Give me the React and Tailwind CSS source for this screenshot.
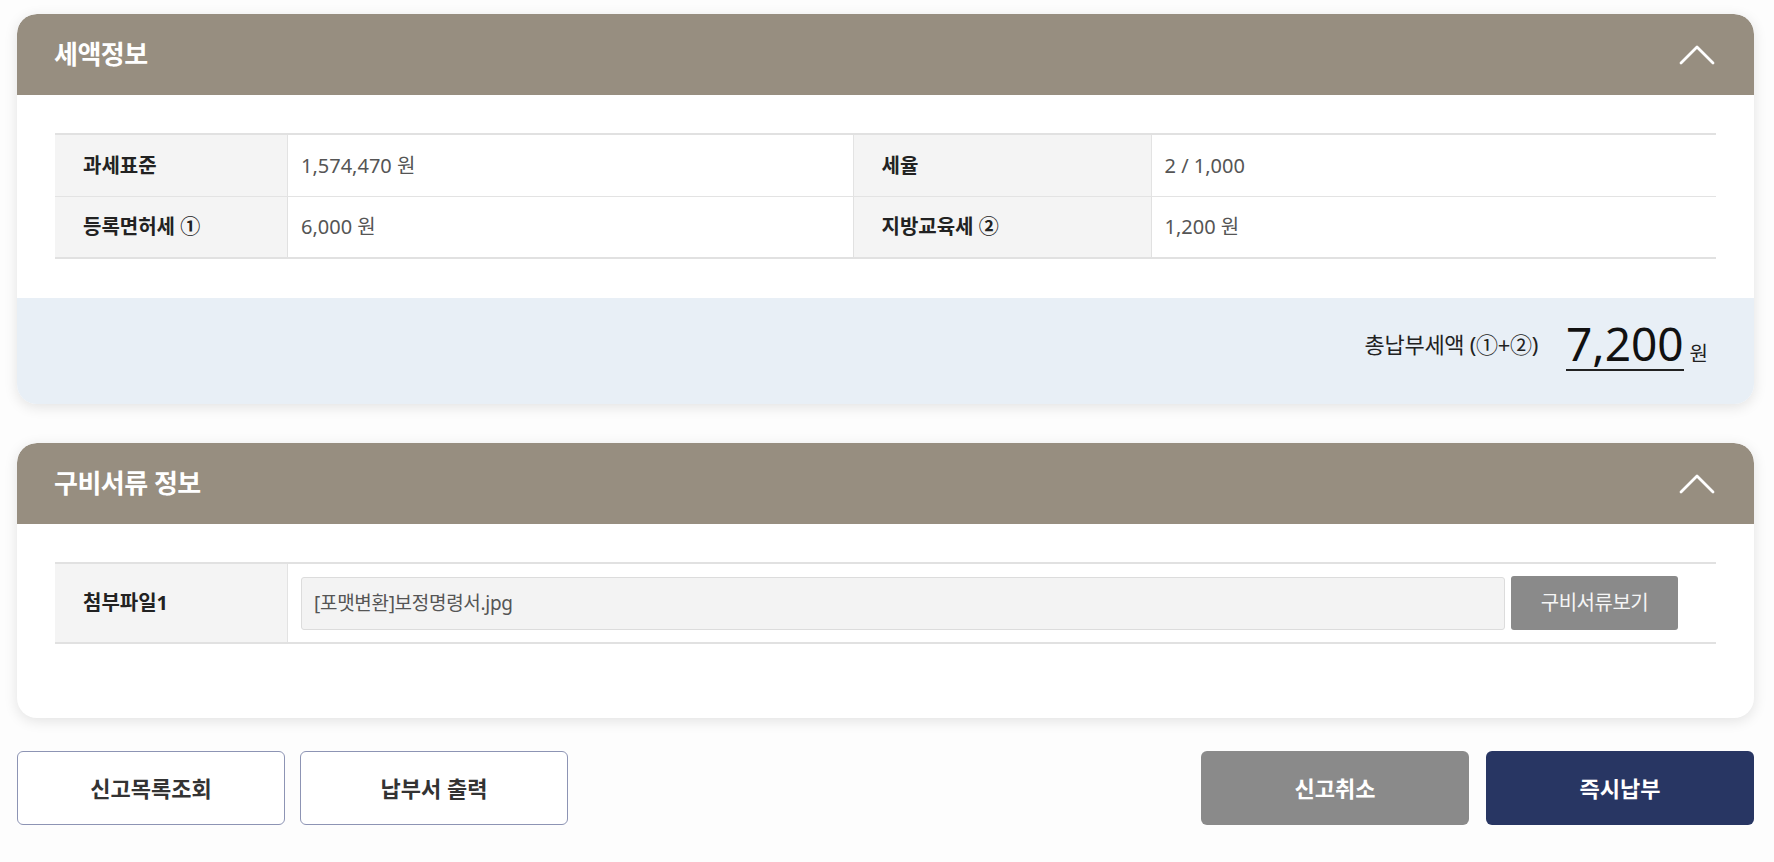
import React from 'react'

const font = { fontFamily: '"Noto Sans", "Noto Sans CJK KR", sans-serif' }

function Chevron() {
    return (
        <svg width="36" height="22" viewBox="0 0 36 22" fill="none" className="shrink-0">
            <path d="M2 19L18 3L34 19" stroke="white" strokeWidth="2.8" strokeLinecap="round" strokeLinejoin="round" />
        </svg>
    )
}

function CardHeader({ title }) {
    return (
        <div className="flex h-[81px] items-center justify-between rounded-t-[20px] bg-[#978e80] pl-[37px] pr-[39px]">
            <h2 className="text-[26px] font-bold tracking-[-0.5px] text-white">{title}</h2>
            <Chevron />
        </div>
    )
}

export default function App() {
    return (
        <div className="min-h-screen bg-[#fdfdfd] pb-10 pl-[17px] pr-[20px] pt-[14px]" style={font}>
            {/* 세액정보 */}
            <section className="overflow-hidden rounded-[20px] bg-white shadow-[0_3px_14px_rgba(0,0,0,0.11)]">
                <CardHeader title="세액정보" />
                <div className="px-[38px] pb-[39px] pt-[38px]">
                    <div className="grid grid-cols-[232px_1fr_298px_1fr] border-t-2 border-[#e1e1e1]">
                        <div className="flex h-[62px] items-center border-b border-[#e3e3e3] bg-[#f4f4f4] pl-[28px] text-[20px] font-bold text-[#222]">과세표준</div>
                        <div className="flex items-center border-b border-l border-[#e3e3e3] pl-[13px] text-[20px] text-[#555]">1,574,470 원</div>
                        <div className="flex items-center border-b border-l border-[#e3e3e3] bg-[#f4f4f4] pl-[28px] text-[20px] font-bold text-[#222]">세율</div>
                        <div className="flex items-center border-b border-l border-[#e3e3e3] pl-[13px] text-[20px] text-[#555]">2 / 1,000</div>

                        <div className="flex h-[62px] items-center border-b-2 border-[#e1e1e1] bg-[#f4f4f4] pl-[28px] text-[20px] font-bold text-[#222]">등록면허세 ①</div>
                        <div className="flex items-center border-b-2 border-l border-[#e1e1e1] pl-[13px] text-[20px] text-[#555]">6,000 원</div>
                        <div className="flex items-center border-b-2 border-l border-[#e1e1e1] bg-[#f4f4f4] pl-[28px] text-[20px] font-bold text-[#222]">지방교육세 ②</div>
                        <div className="flex items-center border-b-2 border-l border-[#e1e1e1] pl-[13px] text-[20px] text-[#555]">1,200 원</div>
                    </div>
                </div>
                <div className="flex h-[106px] items-center justify-end bg-[#e8eff6] pb-[14px] pr-[46px]">
                    <span className="mr-[28px] text-[22px] tracking-[-0.3px] text-[#222]">총납부세액 (①+②)</span>
                    <div className="flex items-baseline">
                        <span className="border-b-2 border-[#222] text-[46px] leading-[1.15] text-[#111]">7,200</span>
                        <span className="ml-[6px] text-[20px] text-[#222]">원</span>
                    </div>
                </div>
            </section>

            {/* 구비서류 정보 */}
            <section className="mt-[39px] overflow-hidden rounded-[20px] bg-white shadow-[0_3px_14px_rgba(0,0,0,0.11)]">
                <CardHeader title="구비서류 정보" />
                <div className="px-[38px] pb-[74px] pt-[38px]">
                    <div className="grid h-[82px] grid-cols-[232px_1fr] border-y-2 border-[#e1e1e1]">
                        <div className="flex items-center bg-[#f4f4f4] pl-[28px] text-[20px] font-bold text-[#222]">첨부파일1</div>
                        <div className="flex items-center gap-[6px] border-l border-[#e3e3e3] pl-[13px] pr-[38px]">
                            <div className="flex h-[53px] flex-1 items-center rounded-[3px] border border-[#dcdcdc] bg-[#f3f3f3] pl-[12px] text-[19px] tracking-[-0.3px] text-[#555]">
                                [포맷변환]보정명령서.jpg
                            </div>
                            <button className="h-[54px] w-[167px] rounded-[3px] bg-[#8a8a8a] text-[20px] tracking-[-0.5px] text-[#f5f5f5]">구비서류보기</button>
                        </div>
                    </div>
                </div>
            </section>

            {/* buttons */}
            <div className="mt-[33px] flex items-center justify-between">
                <div className="flex gap-[15px]">
                    <button className="h-[74px] w-[268px] rounded-[6px] border border-[#8d94b4] bg-white text-[22px] font-bold text-[#333]">신고목록조회</button>
                    <button className="h-[74px] w-[268px] rounded-[6px] border border-[#8d94b4] bg-white text-[22px] font-bold text-[#333]">납부서 출력</button>
                </div>
                <div className="flex gap-[17px]">
                    <button className="h-[74px] w-[268px] rounded-[6px] bg-[#8a8a8a] text-[22px] font-bold text-white">신고취소</button>
                    <button className="h-[74px] w-[268px] rounded-[6px] bg-[#283663] text-[22px] font-bold text-white">즉시납부</button>
                </div>
            </div>
        </div>
    )
}
